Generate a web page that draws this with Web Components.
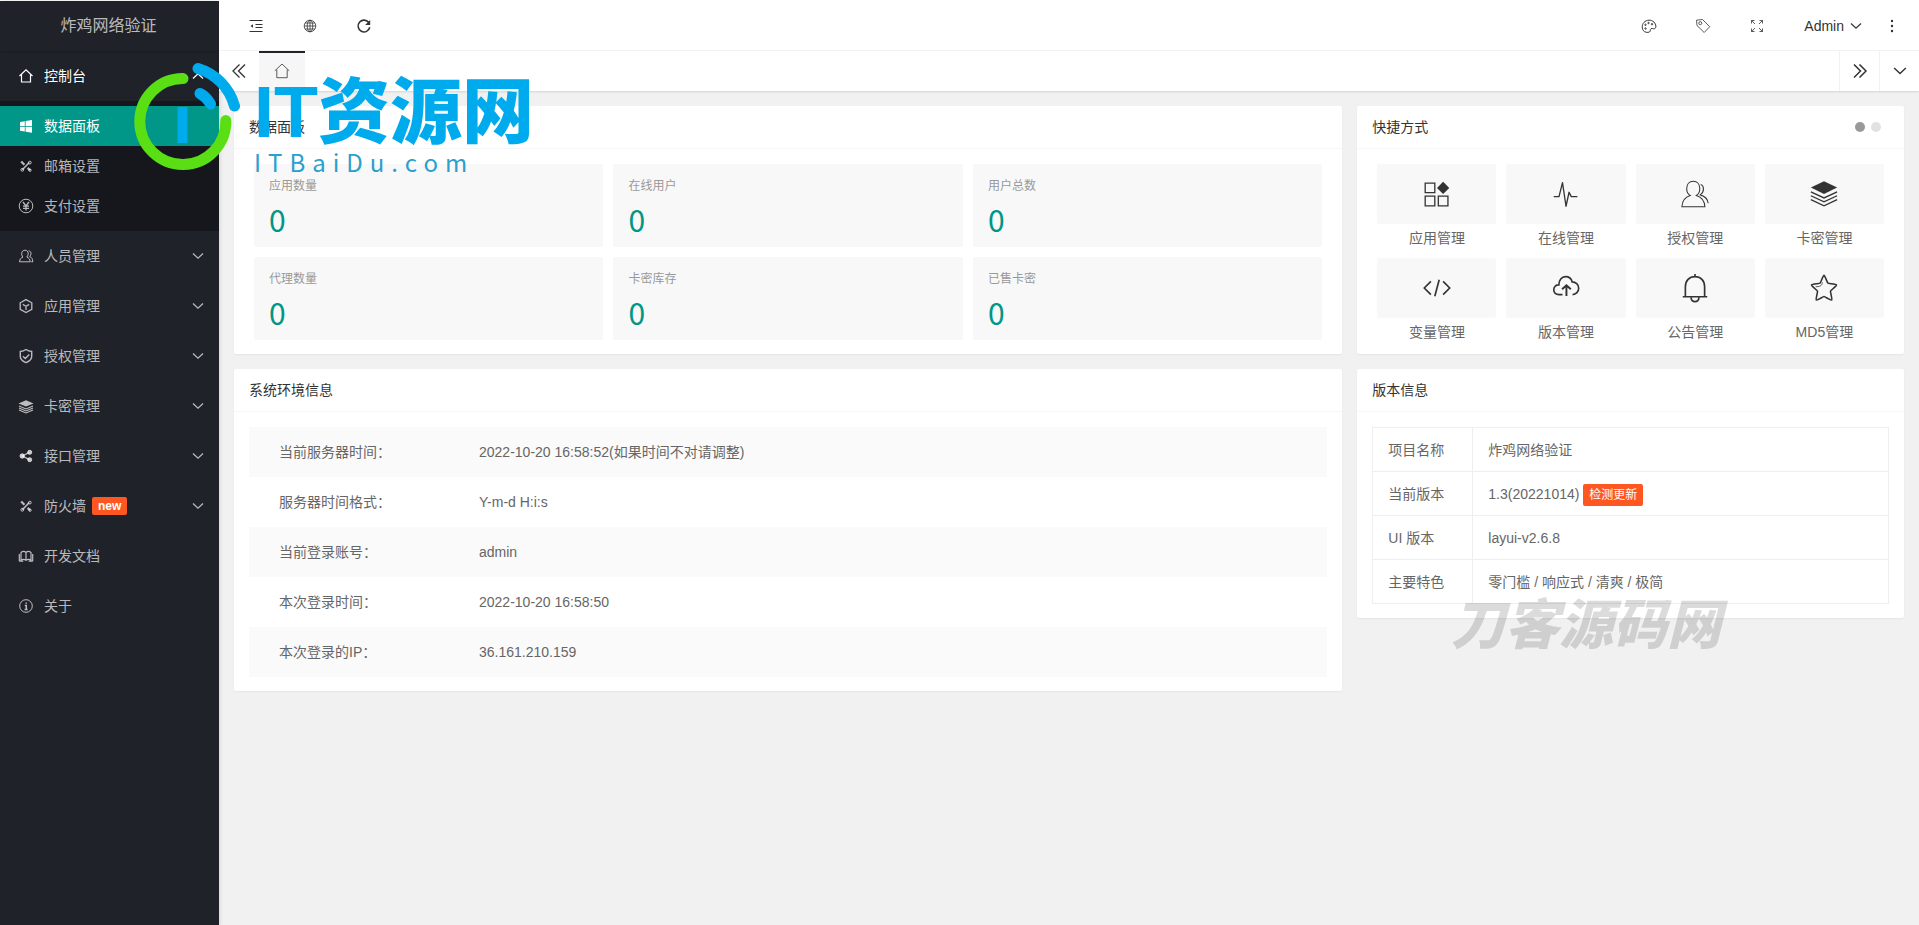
<!DOCTYPE html>
<html lang="zh-CN">
<head>
<meta charset="utf-8">
<title>炸鸡网络验证</title>
<meta name="viewport" content="width=device-width, initial-scale=1">
<style>
  body { margin: 0; background: #f1f1f1; font: 14px/24px "Liberation Sans", "Noto Sans CJK SC", sans-serif; color: #333; }
</style>
</head>
<body>
<adm-shell>
  <adm-sidebar slot="side" brand="炸鸡网络验证">
    <adm-nav icon="home" label="控制台" open>
      <adm-subnav icon="windows" label="数据面板" active></adm-subnav>
      <adm-subnav icon="tools" label="邮箱设置"></adm-subnav>
      <adm-subnav icon="yen" label="支付设置"></adm-subnav>
    </adm-nav>
    <adm-nav icon="users" label="人员管理" more></adm-nav>
    <adm-nav icon="cube" label="应用管理" more></adm-nav>
    <adm-nav icon="shield" label="授权管理" more></adm-nav>
    <adm-nav icon="layers" label="卡密管理" more></adm-nav>
    <adm-nav icon="share" label="接口管理" more></adm-nav>
    <adm-nav icon="tools" label="防火墙" badge="new" more></adm-nav>
    <adm-nav icon="book" label="开发文档"></adm-nav>
    <adm-nav icon="info" label="关于"></adm-nav>
  </adm-sidebar>
  <adm-topbar slot="top" user="Admin"></adm-topbar>
  <adm-tabs slot="top"></adm-tabs>

  <adm-card wide heading="数据面板">
    <adm-stats>
      <adm-stat label="应用数量" value="0"></adm-stat>
      <adm-stat label="在线用户" value="0"></adm-stat>
      <adm-stat label="用户总数" value="0"></adm-stat>
      <adm-stat label="代理数量" value="0"></adm-stat>
      <adm-stat label="卡密库存" value="0"></adm-stat>
      <adm-stat label="已售卡密" value="0"></adm-stat>
    </adm-stats>
  </adm-card>
  <adm-card heading="快捷方式">
    <adm-dots slot="extra"></adm-dots>
    <adm-shortcuts>
      <adm-shortcut icon="apps" label="应用管理"></adm-shortcut>
      <adm-shortcut icon="pulse" label="在线管理"></adm-shortcut>
      <adm-shortcut icon="usersLg" label="授权管理"></adm-shortcut>
      <adm-shortcut icon="layersLg" label="卡密管理"></adm-shortcut>
      <adm-shortcut icon="code" label="变量管理"></adm-shortcut>
      <adm-shortcut icon="cloud" label="版本管理"></adm-shortcut>
      <adm-shortcut icon="bell" label="公告管理"></adm-shortcut>
      <adm-shortcut icon="star" label="MD5管理"></adm-shortcut>
    </adm-shortcuts>
  </adm-card>
  <adm-card wide heading="系统环境信息"><adm-env></adm-env></adm-card>
  <adm-card heading="版本信息"><adm-version></adm-version></adm-card>

  <adm-site-mark slot="over"></adm-site-mark>
  <adm-source-mark slot="over"></adm-source-mark>
</adm-shell>

<script>
const S = (w, body, extra = '') => ({ w, body: `<g fill="none" stroke="currentColor" ${extra}>${body}</g>` });
const ICONS = {
  home: S(16, '<path d="M1.5 8 8 1.8 14.5 8M3.5 6.8V14h9V6.8"/>', 'stroke-width="1.2"'),
  windows: S(16, '<g fill="currentColor" stroke="none"><path d="M2 4 6.8 3.2V8H2zM7.6 3 14 2v6H7.6zM2 8.8h4.8v4.8L2 12.8zM7.6 8.8H14v6L7.6 13.8z"/></g>'),
  tools: S(16, '<path d="M3.2 3.4 6.400 6.800M9.6 9.9 12 12.2" stroke-width="2.2"/><path d="m4.300 11.800 7-7.300" stroke-width="1.6"/><circle cx="11.800" cy="4.600" r="1.400"/><circle cx="4.300" cy="11.800" r="1.400"/><circle cx="12" cy="12.200" r="1.200"/>'),
  yen: S(16, '<circle cx="8" cy="8" r="6.8"/><path d="m5 4 3 4 3-4M8 8v4.6M5 8.2h6M5 10.4h6" stroke-width="1.3"/>'),
  users: S(16, '<path d="M7 2.200c2 0 3.200 1.500 3.200 3.300S9.300 8.600 8.800 9c2 .8 3.200 2.200 3.400 4.800H1.500C1.700 11.200 3 9.800 5 9 4.300 8.600 3.700 7.300 3.700 5.500S5 2.200 7 2.200zM10.600 2.800c1.700.3 2.600 1.300 2.400 3-.1 1.300-.6 2.100-1.300 2.700 2 .8 2.900 2.300 3.100 5.300h-1.600"/>'),
  cube: S(16, '<path d="m8 1.600 5.800 3.200v6.600L8 14.600l-5.800-3.200V4.800zM4.800 6.400 8 8.200l3.200-1.800M8 8.200V12" stroke-width="1.300"/>'),
  shield: S(16, '<path d="M8 1.500c1.800 1.300 3.600 1.900 5.700 2v5c0 3-2.500 4.800-5.700 6.200-3.200-1.400-5.700-3.200-5.700-6.200v-5c2.100-.1 3.900-.7 5.700-2zM5 8.200l2.300 2.200 4-4" stroke-width="1.400"/>'),
  layers: S(16, '<path fill="currentColor" stroke="none" d="M8 2.200 15.500 5.400 8 8.600.5 5.400z"/><path d="m1 8 7 3 7-3M1 10l7 3 7-3M1 12l7 3 7-3" stroke-width="1.100"/>'),
  share: S(16, '<g fill="currentColor"><circle cx="4.200" cy="8" r="2.200"/><circle cx="11.700" cy="4.300" r="2"/><circle cx="11.700" cy="11.700" r="2"/></g><path d="M11.500 4.300 4.200 8l7.300 3.700" stroke-width="1.300"/>'),
  book: S(16, '<path d="M1.300 13.200V6M14.700 13.200V6M3 12V4.500c1.700-1.300 3.500-1.300 5 0 1.500-1.300 3.300-1.300 5 0V12c-1.700-.9-3.500-.8-5 .3-1.500-1.100-3.300-1.200-5-.3zM8 4.500v7.800M1.300 13.200h4M10.700 13.200h4"/>', 'stroke-width="1.2"'),
  info: S(16, '<circle cx="8" cy="8" r="6.300"/><path d="M8.200 4.400v1.400M6.800 7.400h1.500v4M6.600 11.400h3" stroke-width="1.500"/>'),
  down: S(12, '<path d="m1 3.500 5 4.700 5-4.700" stroke-width="1.200"/>'),
  up: S(12, '<path d="m1 8.500 5-4.700 5 4.700" stroke-width="1.200"/>'),
  menu: S(16, '<path d="M1.500 2.500h13M7.500 6.500h7M7.500 9.500h7M1.500 13.500h13" stroke-width="1.200"/><path fill="currentColor" stroke="none" d="m2.500 8 2.500-1.800v3.600z"/>'),
  globe: S(16, '<circle cx="8" cy="8" r="5.800"/><ellipse cx="8" cy="8" rx="2.800" ry="5.800"/><path d="M8 2.200v11.600M2.200 8h11.600M3 5h10M3 11h10"/>', 'stroke-width=".8"'),
  refresh: S(16, '<path d="M13 4.800A5.900 5.900 0 1 0 13.800 9.300" stroke-width="1.600"/><path fill="currentColor" stroke="none" d="M14.200 2v5h-5z"/>'),
  palette: S(16, '<path d="M2.300 12.600C.5 9.500 1 5.700 4 3.500c3.200-2.300 7.800-1.500 9.800 1.600 1.500 2.300 1.500 5-.2 5.600-1.300.5-2.300-.8-3.500 0-1.300.9-.2 2.500-1.700 3.300-1.800.9-4.800.3-6.100-1.400z"/><circle cx="4.500" cy="10.500" r=".7"/><circle cx="4.500" cy="6.800" r=".7"/><circle cx="7.500" cy="5" r=".7"/><circle cx="11" cy="6.200" r=".7"/>'),
  tag: S(16, '<path d="M1.500 2.200 7.500 1.500l7.200 7.200-5.500 5.800L2 7.500z"/><circle cx="5.300" cy="5.200" r="1.500"/>', 'stroke-width=".8"'),
  expand: S(16, '<path d="M5.500 2.500h-3v3M2.500 2.500 6 6M10.500 2.500h3v3M13.500 2.500 10 6M5.500 13.500h-3v-3M2.500 13.500 6 10M10.500 13.500h3v-3M13.500 13.500 10 10"/>', 'stroke-width=".8"'),
  more: S(16, '<g fill="currentColor" stroke="none"><circle cx="8" cy="3" r="1.200"/><circle cx="8" cy="8" r="1.200"/><circle cx="8" cy="13" r="1.200"/></g>'),
  left2: S(16, '<path d="M8.500 1.500 2 8l6.500 6.500M14 1.500 7.500 8l6.500 6.500" stroke-width="1.300"/>'),
  right2: S(16, '<path d="M2 1.500 8.500 8 2 14.500M7.500 1.500 14 8l-6.500 6.500" stroke-width="1.500"/>'),
  homeTab: S(16, '<path d="M.8 7.800 8 1l7.200 6.800M2.800 6.500v8.200h10.400V6.500" stroke-width=".8"/>'),
  apps: S(32, '<path d="M2.500 3.500h11v11h-11zM2.500 18.500h11v11h-11zM17.500 18.500h11v11h-11z" stroke-width="1.500"/><path fill="currentColor" stroke="none" d="m23 2 7 7-7 7-7-7z"/>'),
  pulse: S(32, '<path d="M2 19h6l4-16 4 27 3.500-16 2.500 5h7" stroke-width="1.500" stroke-linejoin="round"/>'),
  usersLg: S(32, '<path d="M14 1.500c4.600 0 7.500 3.200 7.500 8.200 0 4-1.600 6.500-4 8 5 1.500 9.300 5.200 9.800 12.800H1C1.500 22.800 5.500 19.200 10.500 17.700c-2.400-1.500-4-4-4-8 0-5 2.900-8.200 7.500-8.200zM22.500 5c4 1.500 4.600 8.500-.5 12 5 1.500 8.500 4.500 9 9.500" stroke-width="1.200"/>'),
  layersLg: S(32, '<path fill="currentColor" stroke="none" d="M16 1.500 31 8.700 16 16 1 8.700z"/><path d="m1 13.500 15 7 15-7M1 18l15 7 15-7M1 22.500l15 7 15-7" stroke-width="1.500"/>'),
  code: S(32, '<path d="M9 8.500 1.500 16 9 23.500M23 8.500l7.500 7.500-7.500 7.500M18.500 6.500l-5 19" stroke-width="1.900"/>'),
  cloud: S(32, '<path d="M12 23.500H8c-3.500 0-6-2-6-5.500s2.800-5.700 5.800-5.500C7.800 7 11 3 15.500 3c4 0 6.700 2.500 7.500 6 4 0 7.500 3 7.500 7.200 0 4-3 7.300-7 7.300" stroke-width="1.900"/><path d="M16.500 25V13M11.500 17.500l5-4.500 5 4.500" stroke-width="2.200"/>'),
  bell: S(32, '<path d="M16 0v3M5 26V14.500C5 7.500 9.500 3 16 3s11 4.500 11 11.500V26M2 26h28M11.500 27c.5 6 8.500 6 9 0" stroke-width="1.900"/>'),
  star: S(32, '<path d="M16 1.500c1 0 3.800 8.500 4.500 9s9.500.8 9.800 1.900-6.600 6.300-6.900 7.300 2.300 9.400 1.400 10.100-7.800-4-8.800-4-7.900 4.700-8.800 4 1.700-9.100 1.400-10.100S1.400 13.500 1.700 12.400s9-1.400 9.800-1.900S15 1.500 16 1.500z" stroke-width="1.800"/><path d="M6.500 14.500c4 0 7.500-.5 7.500-5" stroke-width=".9"/>')
};

/* Registers an element whose shadow root is rendered from its attributes. */
function define(tag, css, html) {
  customElements.define(tag, class extends HTMLElement {
    constructor() { super(); this.attachShadow({ mode: 'open' }); }
    connectedCallback() {
      const a = n => this.getAttribute(n) || '';
      const has = n => this.hasAttribute(n);
      this.shadowRoot.innerHTML = `<style>*{box-sizing:border-box}a{color:inherit;text-decoration:none}button{border:0;padding:0;margin:0;background:none;font:inherit;color:inherit;cursor:pointer}${css}</style>${html(a, has)}`;
    }
  });
}

define('adm-icon', ':host{display:inline-flex;flex:none;width:16px;height:16px}svg{width:100%;height:100%;overflow:visible}',
  a => { const i = ICONS[a('name')]; return `<svg viewBox="0 0 ${i.w} ${i.w}" aria-hidden="true">${i.body}</svg>`; });

define('adm-shell', `
  :host{display:grid;position:relative;grid-template-columns:219px minmax(0,1fr);min-height:100vh;padding-top:1px;box-sizing:border-box;background:linear-gradient(#fff 1px,#f1f1f1 1px)}
  main{display:grid;grid-template-columns:repeat(12,minmax(0,1fr));gap:15px;align-items:start;padding:15px}
  ::slotted(adm-card){grid-column:span 4}
  ::slotted(adm-card[wide]){grid-column:span 8}`,
  () => `<slot name="side"></slot><div><header><slot name="top"></slot></header><main><slot></slot></main></div><slot name="over"></slot>`);

define('adm-sidebar', `
  :host{display:block;background:#20222a;color:rgba(255,255,255,.7);box-shadow:1px 0 4px rgba(0,0,0,.12)}
  .brand{display:block;height:50px;line-height:50px;padding-right:2px;text-align:center;font-size:16px;box-shadow:0 1px 2px rgba(0,0,0,.15)}`,
  a => `<a class="brand" href="#">${a('brand')}</a><nav><slot></slot></nav>`);

define('adm-nav', `
  :host{display:block}
  .row{display:flex;align-items:center;height:50px;padding:0 15px 0 18px}
  .row>adm-icon:first-child{margin-right:10px}
  .row>.chev{width:12px;height:12px;margin-left:auto}
  :host([open]) .row{color:#fff}
  .badge{height:18px;line-height:18px;padding:0 6px;margin-left:6px;border-radius:2px;background:#ff5722;color:#fff;font-size:12px;font-weight:bold}
  .sub{padding:5px 0;background:rgba(0,0,0,.3)}`,
  (a, has) => `<a class="row" href="#"><adm-icon name="${a('icon')}"></adm-icon><span>${a('label')}</span>${a('badge') ? `<span class="badge">${a('badge')}</span>` : ''}${has('open') || has('more') ? `<adm-icon class="chev" name="${has('open') ? 'up' : 'down'}"></adm-icon>` : ''}</a>${has('open') ? '<div class="sub"><slot></slot></div>' : ''}`);

define('adm-subnav', `
  :host{display:block}
  a{display:flex;align-items:center;gap:10px;height:40px;padding:0 18px}
  :host([active]) a{background:#009688;color:#fff}`,
  a => `<a href="#"><adm-icon name="${a('icon')}"></adm-icon>${a('label')}</a>`);

define('adm-topbar', `
  :host{display:flex;justify-content:space-between;height:50px;padding:0 17px 0 10px;background:#fff;border-bottom:1px solid #f4f4f4;box-sizing:border-box}
  div{display:flex}
  button{display:flex;align-items:center;justify-content:center;width:54px}
  .user{width:auto;padding:0 20px;gap:6px}
  .user adm-icon{width:12px;height:12px}
  .more{width:20px}`,
  a => `<div><button aria-label="侧边伸缩"><adm-icon name="menu"></adm-icon></button><button aria-label="前台"><adm-icon name="globe"></adm-icon></button><button aria-label="刷新"><adm-icon name="refresh"></adm-icon></button></div>
  <div><button aria-label="主题"><adm-icon name="palette"></adm-icon></button><button aria-label="便签"><adm-icon name="tag"></adm-icon></button><button aria-label="全屏"><adm-icon name="expand"></adm-icon></button><button class="user">${a('user')}<adm-icon name="down"></adm-icon></button><button class="more" aria-label="更多"><adm-icon name="more"></adm-icon></button></div>`);

define('adm-tabs', `
  :host{display:flex;height:40px;background:#fff;box-shadow:0 1px 2px rgba(0,0,0,.12)}
  button{display:flex;align-items:center;justify-content:center;width:40px}
  .tab{width:46px;padding-bottom:2px;background:#f6f6f6;border-top:2px solid #20222a}
  .next{margin-left:auto}
  .next,.list{border-left:1px solid #f2f2f2}
  .list adm-icon{width:14px;height:14px}`,
  () => `<button aria-label="向左"><adm-icon name="left2"></adm-icon></button><button class="tab" aria-label="主页"><adm-icon name="homeTab"></adm-icon></button><button class="next" aria-label="向右"><adm-icon name="right2"></adm-icon></button><button class="list" aria-label="标签操作"><adm-icon name="down"></adm-icon></button>`);

define('adm-card', `
  :host{display:block;background:#fff;border-radius:2px;box-shadow:0 1px 2px rgba(0,0,0,.05)}
  header{display:flex;align-items:center;justify-content:space-between;height:43px;padding:0 15px;border-bottom:1px solid #f6f6f6}
  h2{margin:0;font-size:14px;font-weight:normal}
  .body{padding:15px 15px 14px;color:#666}`,
  a => `<header><h2>${a('heading')}</h2><slot name="extra"></slot></header><div class="body"><slot></slot></div>`);

define('adm-dots', `
  :host{display:flex;gap:6px;padding-right:8px}
  button{width:10px;height:10px;border-radius:50%;background:#e2e2e2}
  .on{background:#999}`,
  () => '<button class="on" aria-label="第一页"></button><button aria-label="第二页"></button>');

define('adm-stats', ':host{display:grid;grid-template-columns:repeat(3,minmax(0,1fr));gap:10px;padding:0 5px}', () => '<slot></slot>');
define('adm-stat', `
  :host{display:block}
  a{display:block;height:83px;padding:10px 15px;background:#f8f8f8;border-radius:2px}
  h3{margin:0;font-size:12px;font-weight:normal;line-height:24px;color:#999}
  p{margin:0;font:30px/42px "Noto Sans CJK SC",sans-serif;color:#009688}`,
  a => `<a href="#"><h3>${a('label')}</h3><p>${a('value')}</p></a>`);

define('adm-shortcuts', ':host{display:grid;grid-template-columns:repeat(4,minmax(0,1fr));gap:8px 10px;padding:0 5px;margin-bottom:-4px}', () => '<slot></slot>');
define('adm-shortcut', `
  :host{display:block;text-align:center}
  a{display:block}
  .box{display:flex;align-items:center;justify-content:center;height:60px;background:#f8f8f8;border-radius:2px;color:#333}
  adm-icon{width:28px;height:28px}
  .name{display:block;line-height:24px;padding-top:2px}`,
  a => `<a href="#"><span class="box"><adm-icon name="${a('icon')}"></adm-icon></span><span class="name">${a('label')}</span></a>`);

const ENV = [['当前服务器时间：', '2022-10-20 16:58:52(如果时间不对请调整)'], ['服务器时间格式：', 'Y-m-d H:i:s'], ['当前登录账号：', 'admin'], ['本次登录时间：', '2022-10-20 16:58:50'], ['本次登录的IP：', '36.161.210.159']];
define('adm-env', `
  :host{display:block}
  table{width:100%;border-collapse:collapse;table-layout:fixed}
  tr{height:50px}
  tr:nth-child(odd){background:#fafafa}
  th,td{padding:0 30px;text-align:left;font-weight:normal}
  th{width:200px;padding-right:0}`,
  () => `<table><tbody>${ENV.map(r => `<tr><th scope="row">${r[0]}</th><td>${r[1]}</td></tr>`).join('')}</tbody></table>`);

const VER = [['项目名称', '炸鸡网络验证'], ['当前版本', '1.3(20221014) <button>检测更新</button>'], ['UI 版本', 'layui-v2.6.8'], ['主要特色', '零门槛 / 响应式 / 清爽 / 极简']];
define('adm-version', `
  :host{display:block}
  table{width:100%;border-collapse:collapse;table-layout:fixed}
  tr{height:44px}
  th,td{border:1px solid #eee;padding:0 15px;text-align:left;font-weight:normal}
  th{width:100px}
  button{height:22px;line-height:22px;padding:0 6px;border-radius:2px;background:#ff5722;color:#fff;font-size:12px}`,
  () => `<table><tbody>${VER.map(r => `<tr><th scope="row">${r[0]}</th><td>${r[1]}</td></tr>`).join('')}</tbody></table>`);

define('adm-site-mark', `
  :host{position:absolute;left:134px;top:60px;display:flex;gap:14px;pointer-events:none;color:#00abed}
  svg{width:106px;height:112px;flex:none}
  .big{font:900 72px/68px "Liberation Sans","Noto Sans CJK SC",sans-serif;white-space:nowrap;margin-top:18px}
  .small{font:24px/32px "Noto Sans CJK SC",sans-serif;letter-spacing:7px;color:#2b9fce}`,
  () => `<svg viewBox="134 60 106 112" fill="none" stroke-width="11" stroke-linecap="round" aria-hidden="true"><path stroke="#5adf15" d="M183 78.500A43 43 0 1 0 225.800 120.500"/><path stroke="#00abed" d="M198 68.500A54 54 0 0 1 234.500 106M200 93.500c4 2 7.500 5.500 10.500 10.500"/><path fill="#00abed" d="M177.500 107h10v36h-10z"/></svg><div><div class="big">IT资源网</div><div class="small">ITBaiDu.com</div></div>`);

define('adm-source-mark', `
  :host{position:absolute;right:198px;top:592px;pointer-events:none;color:rgba(0,0,0,.14);font:italic 900 54px/58px "Noto Sans CJK SC",sans-serif;white-space:nowrap}`,
  () => '刀客源码网');
</script>
</body>
</html>
